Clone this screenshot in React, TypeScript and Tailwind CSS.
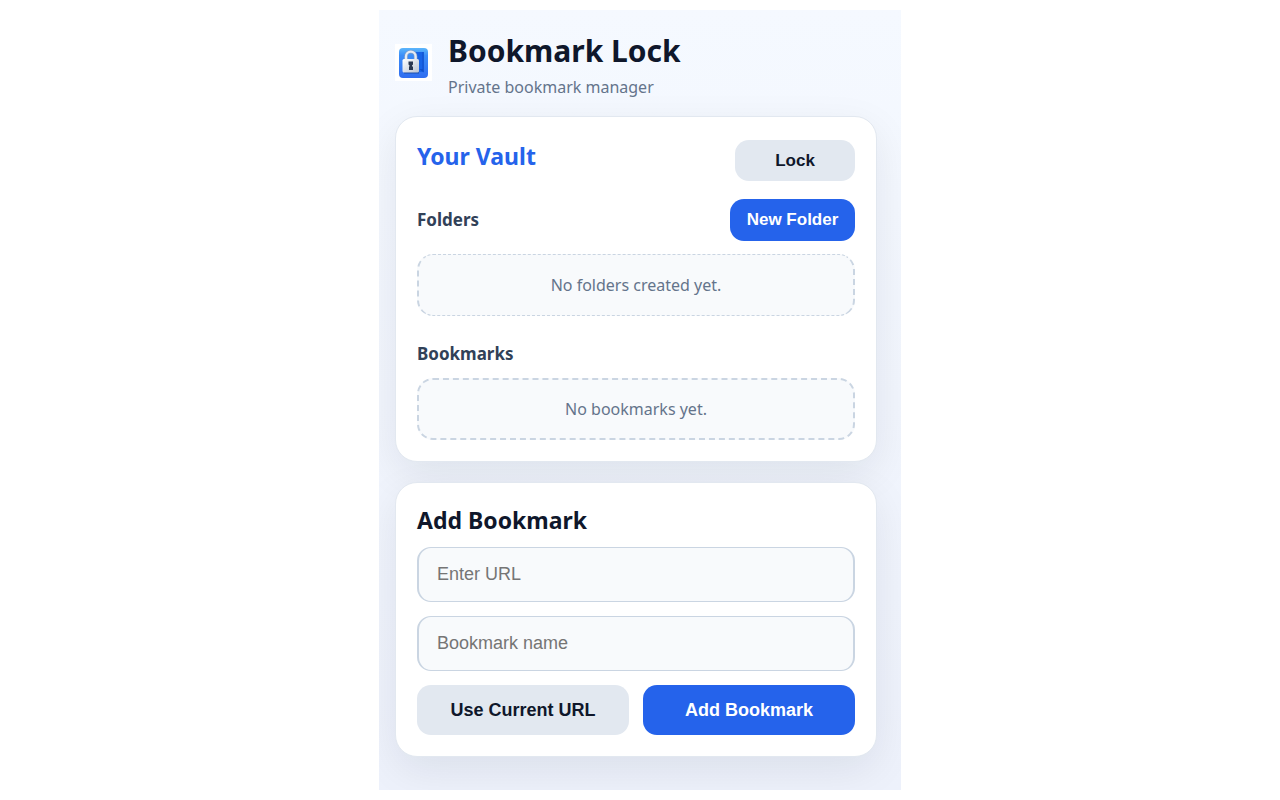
import type { ReactNode } from "react";

function LockLogo() {
  return (
    <svg viewBox="0 0 37 37" className="mt-4 h-[37px] w-[37px] shrink-0" aria-hidden="true">
      <defs>
        <linearGradient id="tile" x1="0" y1="0" x2="0" y2="1">
          <stop offset="0" stopColor="#5cb6fb" />
          <stop offset="0.25" stopColor="#3b8df8" />
          <stop offset="1" stopColor="#2f6df0" />
        </linearGradient>
        <linearGradient id="body" x1="0" y1="0" x2="1" y2="1">
          <stop offset="0" stopColor="#ffffff" />
          <stop offset="1" stopColor="#b9c3d3" />
        </linearGradient>
      </defs>
      <rect width="37" height="37" fill="#ffffff" />
      <rect x="4" y="4" width="29" height="30" rx="4" fill="url(#tile)" />
      <path d="M20 8h8.500v20h-8.500z" fill="#1763e6" />
      <path d="M27.500 8h1.200v20.500l-4.500-3.500h3.300z" fill="#0f4fcb" />
      <path d="M11 17v-4.500a4.800 4.800 0 0 1 9.600 0v4.500" fill="none" stroke="#7d9cc9" strokeWidth="3.500" />
      <path d="M11 17v-4.500a4.800 4.800 0 0 1 9.600 0v4.500" fill="none" stroke="#e6ebf3" strokeWidth="2.300" />
      <path d="M9 28h15v1.500h-15z" fill="#1b4fae" />
      <rect x="7.500" y="15" width="16.500" height="13.500" rx="1.500" fill="url(#body)" />
      <path d="M13.500 17.500h4.500v3l-1 1v1h1v3.500h-4v-3.500h.5v-1l-1-1z" fill="#27354f" />
    </svg>
  );
}

function Card({ children, className }: { children: ReactNode; className: string }) {
  return (
    <section
      className={`rounded-[22px] border border-slate-200 bg-white px-[21px] pb-[21px] shadow-[0_13px_40px_rgba(15,23,42,0.08)] ${className}`}
    >
      {children}
    </section>
  );
}

const inputClass =
  "h-[55px] w-full rounded-[14px] border-x-2 border-y border-slate-300 bg-slate-50 px-[18px] font-['Liberation_Sans',Arial,sans-serif] text-lg text-slate-900 placeholder:text-[#757575]";

const buttonClass = "rounded-[14px] font-['Liberation_Sans',Arial,sans-serif] font-bold";

export default function App() {
  return (
    <div className="min-h-screen bg-white p-[10px] font-['Noto_Sans','Open_Sans',sans-serif] text-slate-900">
      <main className="mx-auto min-h-[calc(100vh-20px)] w-full max-w-[522px] overflow-hidden bg-linear-to-b from-[#f5f9ff] to-[#edf1fb] pt-[18px] pr-6 pb-8 pl-4">
        <header className="mb-4 flex items-start gap-4">
          <LockLogo />
          <div>
            <h1 className="text-3xl leading-[46px] font-bold">Bookmark Lock</h1>
            <p className="text-base leading-[26px] text-[#64748b]">Private bookmark manager</p>
          </div>
        </header>

        <Card className="pt-[23px]">
          <div className="flex items-start justify-between">
            <h2 className="text-[23px] leading-8 font-bold text-[#2563eb]">Your Vault</h2>
            <button type="button" className={`${buttonClass} h-[41px] w-[120px] bg-slate-200 text-[17px]`}>
              Lock
            </button>
          </div>

          <div className="mt-[18px] flex items-center justify-between">
            <h3 className="text-[17px] leading-7 font-bold text-slate-700">Folders</h3>
            <button type="button" className={`${buttonClass} h-[42px] w-[125px] bg-[#2563eb] text-[17px] text-white`}>
              New Folder
            </button>
          </div>
          <p className="mt-[13px] flex h-[62px] items-center justify-center rounded-2xl border-x-2 border-y border-dashed border-slate-300 bg-slate-50 text-base text-[#64748b]">
            No folders created yet.
          </p>

          <h3 className="mt-6 text-[17px] leading-7 font-bold text-slate-700">Bookmarks</h3>
          <p className="mt-[10px] flex h-[62px] items-center justify-center rounded-2xl border-2 border-dashed border-slate-300 bg-slate-50 text-base text-[#64748b]">
            No bookmarks yet.
          </p>
        </Card>

        <Card className="mt-5 pt-5">
          <h2 className="text-[23px] leading-[34px] font-bold">Add Bookmark</h2>
          <form className="mt-[10px] grid gap-[14px]" onSubmit={(e) => e.preventDefault()}>
            <input type="url" aria-label="Enter URL" placeholder="Enter URL" className={inputClass} />
            <input type="text" aria-label="Bookmark name" placeholder="Bookmark name" className={inputClass} />
            <div className="grid grid-cols-2 gap-[14px]">
              <button type="button" className={`${buttonClass} h-[50px] bg-slate-200 text-lg`}>
                Use Current URL
              </button>
              <button type="submit" className={`${buttonClass} h-[50px] bg-[#2563eb] text-lg text-white`}>
                Add Bookmark
              </button>
            </div>
          </form>
        </Card>
      </main>
    </div>
  );
}
